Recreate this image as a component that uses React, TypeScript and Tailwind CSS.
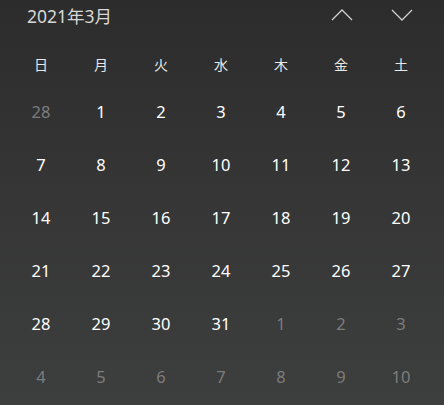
import React from "react";

const weekdays = ["日", "月", "火", "水", "木", "金", "土"];

type Day = { n: number; dim: boolean };

function buildDays(): Day[] {
  const days: Day[] = [{ n: 28, dim: true }];
  for (let i = 1; i <= 31; i++) days.push({ n: i, dim: false });
  for (let i = 1; i <= 10; i++) days.push({ n: i, dim: true });
  return days;
}

export default function App() {
  const days = buildDays();
  return (
    <div
      className="w-[444px] h-[405px] overflow-hidden bg-gradient-to-b from-[#2c2c2c] via-[#363636] to-[#3d3e3e] text-white"
      style={{ fontFamily: '"Noto Sans", "Open Sans", "Noto Sans CJK JP", sans-serif' }}
    >
      <div className="flex h-[34px] items-center pl-[27px]">
        <span className="text-[17.5px] text-[#d8d8d8] leading-none">2021年3月</span>
        <div className="ml-auto flex h-full items-center pr-[13px]">
          <div className="flex w-[60px] justify-center pb-[5px] pl-[2px]">
            <svg width="22" height="12" viewBox="0 0 22 12" fill="none">
              <path d="M1 11 L11 1 L21 11" stroke="#d0d0d0" strokeWidth="1.3" />
            </svg>
          </div>
          <div className="flex w-[60px] justify-center pb-[5px] pl-[2px]">
            <svg width="22" height="12" viewBox="0 0 22 12" fill="none">
              <path d="M1 1 L11 11 L21 1" stroke="#d0d0d0" strokeWidth="1.3" />
            </svg>
          </div>
        </div>
      </div>
      <div className="pl-[11px] pr-[13px] pt-[8px]">
        <div className="grid grid-cols-7 h-[44px] items-center">
          {weekdays.map((w) => (
            <div
              key={w}
              className="text-center text-[14px] text-[#e8e8e8]"
              style={{ fontFamily: '"Noto Sans CJK JP", sans-serif' }}
            >
              {w}
            </div>
          ))}
        </div>
        <div className="grid grid-cols-7 auto-rows-[53px] items-center">
          {days.map((d, i) => (
            <div
              key={i}
              className={`text-center text-[16.5px] ${d.dim ? "text-[#7c7c7c]" : "text-white"}`}
            >
              {d.n}
            </div>
          ))}
        </div>
      </div>
    </div>
  );
}
